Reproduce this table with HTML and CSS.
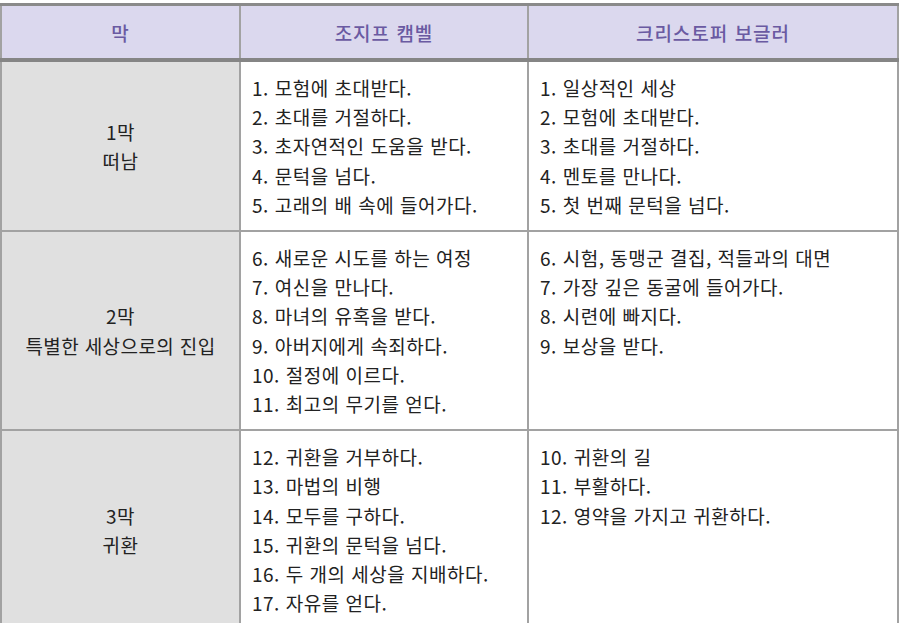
FILE: index.html
```html
<!DOCTYPE html>
<html lang="ko">
<head>
<meta charset="utf-8">
<title>영웅의 여정 비교</title>
<link rel="stylesheet" href="styles.css">
</head>
<body>
<div class="table">
  <div class="head grid">
    <div class="hcell">막</div>
    <div class="hcell">조지프 캠벨</div>
    <div class="hcell">크리스토퍼 보글러</div>
  </div>
  <div class="body grid">
    <div class="act">1막<br>떠남</div>
    <div class="cell">1. 모험에 초대받다.<br>2. 초대를 거절하다.<br>3. 초자연적인 도움을 받다.<br>4. 문턱을 넘다.<br>5. 고래의 배 속에 들어가다.</div>
    <div class="cell">1. 일상적인 세상<br>2. 모험에 초대받다.<br>3. 초대를 거절하다.<br>4. 멘토를 만나다.<br>5. 첫 번째 문턱을 넘다.</div>

    <div class="act">2막<br>특별한 세상으로의 진입</div>
    <div class="cell">6. 새로운 시도를 하는 여정<br>7. 여신을 만나다.<br>8. 마녀의 유혹을 받다.<br>9. 아버지에게 속죄하다.<br>10. 절정에 이르다.<br>11. 최고의 무기를 얻다.</div>
    <div class="cell">6. 시험, 동맹군 결집, 적들과의 대면<br>7. 가장 깊은 동굴에 들어가다.<br>8. 시련에 빠지다.<br>9. 보상을 받다.</div>

    <div class="act">3막<br>귀환</div>
    <div class="cell">12. 귀환을 거부하다.<br>13. 마법의 비행<br>14. 모두를 구하다.<br>15. 귀환의 문턱을 넘다.<br>16. 두 개의 세상을 지배하다.<br>17. 자유를 얻다.</div>
    <div class="cell">10. 귀환의 길<br>11. 부활하다.<br>12. 영약을 가지고 귀환하다.</div>
  </div>
</div>
</body>
</html>
```
FILE: styles.css
```css
html, body {
  margin: 0;
  padding: 0;
  background: #ffffff;
}
body {
  padding-top: 3px;
  font-family: "Noto Sans CJK KR", "Noto Sans", sans-serif;
  color: #222222;
}
.table {
  width: 899px;
  background: #a2a2a2;
  border-top: 3px solid #8a8a8a;
}
.grid {
  display: grid;
  grid-template-columns: 237px 286px 368px;
  column-gap: 2px;
  padding: 0 2px;
}
.head {
  border-bottom: 4px solid #858585;
}
.hcell {
  background: #dbd8ee;
  color: #6a5aa2;
  height: 52px;
  display: flex;
  align-items: center;
  justify-content: center;
  font-size: 19px;
  font-weight: 500;
  letter-spacing: 1px;
}
.body {
  row-gap: 2px;
}
.act {
  background: #e0e0e0;
  display: flex;
  align-items: center;
  justify-content: center;
  text-align: center;
  font-size: 19px;
  line-height: 29.2px;
  letter-spacing: 0.4px;
}
.cell {
  background: #ffffff;
  padding: 11px 8px 11px 11px;
  font-size: 19px;
  line-height: 29.2px;
  letter-spacing: 0.5px;
  white-space: nowrap;
}
```
